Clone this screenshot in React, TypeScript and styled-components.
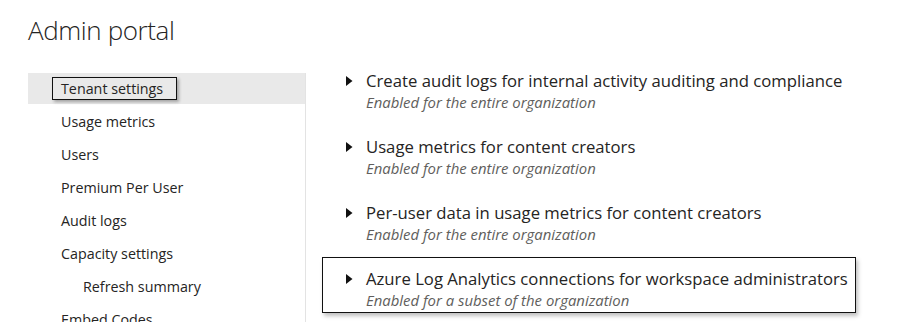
import styled, { createGlobalStyle } from "styled-components";

const GlobalStyle = createGlobalStyle`
    html, body {
        margin: 0;
        padding: 0;
        background: #ffffff;
        overflow: hidden;
    }
    body {
        font-family: "Open Sans", "Liberation Sans", sans-serif;
        color: #252423;
    }
`;

const navItems = [
    { label: "Tenant settings", selected: true },
    { label: "Usage metrics" },
    { label: "Users" },
    { label: "Premium Per User" },
    { label: "Audit logs" },
    { label: "Capacity settings" },
    { label: "Refresh summary", sub: true },
    { label: "Embed Codes" },
    { label: "Organizational visuals" },
];

const settings = [
    { title: "Create audit logs for internal activity auditing and compliance", scope: "Enabled for the entire organization" },
    { title: "Usage metrics for content creators", scope: "Enabled for the entire organization" },
    { title: "Per-user data in usage metrics for content creators", scope: "Enabled for the entire organization" },
    { title: "Azure Log Analytics connections for workspace administrators", scope: "Enabled for a subset of the organization", marked: true },
];

const Caret = () => (
    <svg width="7" height="10" viewBox="0 0 7 10">
        <polygon points="0,0 6.5,5 0,10" fill="#111" />
    </svg>
);

const App = () => {
    return (
        <Page>
            <GlobalStyle />
            <Title>Admin portal</Title>
            <Body>
                <Sidebar>
                    {navItems.map((item) => (
                        <NavItem key={item.label} selected={!!item.selected} sub={!!item.sub}>
                            {item.selected ? <Marked>{item.label}</Marked> : item.label}
                        </NavItem>
                    ))}
                </Sidebar>
                <Content>
                    {settings.map((s) => (
                        <Setting key={s.title} marked={!!s.marked}>
                            <CaretBox>
                                <Caret />
                            </CaretBox>
                            <div>
                                <SettingTitle>{s.title}</SettingTitle>
                                <Scope>{s.scope}</Scope>
                            </div>
                        </Setting>
                    ))}
                </Content>
            </Body>
        </Page>
    );
};

export default App;

const Page = styled.div`
    padding-left: 28px;
    height: 322px;
    overflow: hidden;
`;

const Title = styled.h1`
    margin: 0;
    height: 73px;
    padding-top: 12px;
    box-sizing: border-box;
    font-size: 26px;
    line-height: 36px;
    font-weight: 300;
    color: #252423;
    letter-spacing: -0.4px;
`;

const Body = styled.div`
    display: flex;
`;

const Sidebar = styled.nav`
    width: 277px;
    border-right: 1px solid #e3e3e3;
    display: flex;
    flex-direction: column;
    gap: 2px;
    min-height: 260px;
`;

const NavItem = styled.div<{ selected: boolean; sub: boolean }>`
    height: 31px;
    display: flex;
    align-items: center;
    padding-left: ${(props) => (props.sub ? 55 : 33)}px;
    background: ${(props) => (props.selected ? "#e9e9e9" : "transparent")};
    font-size: 14.3px;
    color: #252423;
`;

const Marked = styled.span`
    border: 1px solid #111;
    padding: 1px 13px 1px 8px;
    margin-left: -9px;
    box-shadow: 2px 2px 3px rgba(0, 0, 0, 0.3);
    line-height: 19px;
`;

const Content = styled.div`
    display: flex;
    flex-direction: column;
    gap: 10px;
    padding-left: 16px;
    margin-top: -14px;
`;

const Setting = styled.div<{ marked: boolean }>`
    width: 534px;
    height: 56px;
    box-sizing: border-box;
    display: flex;
    align-items: flex-start;
    padding: 10px 0 0 23px;
    border: 1px solid ${(props) => (props.marked ? "#111" : "transparent")};
    box-shadow: ${(props) => (props.marked ? "2px 3px 4px rgba(0, 0, 0, 0.25)" : "none")};
`;

const CaretBox = styled.div`
    width: 20px;
    height: 22px;
    display: flex;
    align-items: center;
    flex-shrink: 0;
`;

const SettingTitle = styled.div`
    font-size: 16.7px;
    line-height: 22px;
    color: #252423;
    white-space: nowrap;
`;

const Scope = styled.div`
    font-size: 14.9px;
    line-height: 20px;
    font-style: italic;
    color: #605e5c;
    white-space: nowrap;
`;
